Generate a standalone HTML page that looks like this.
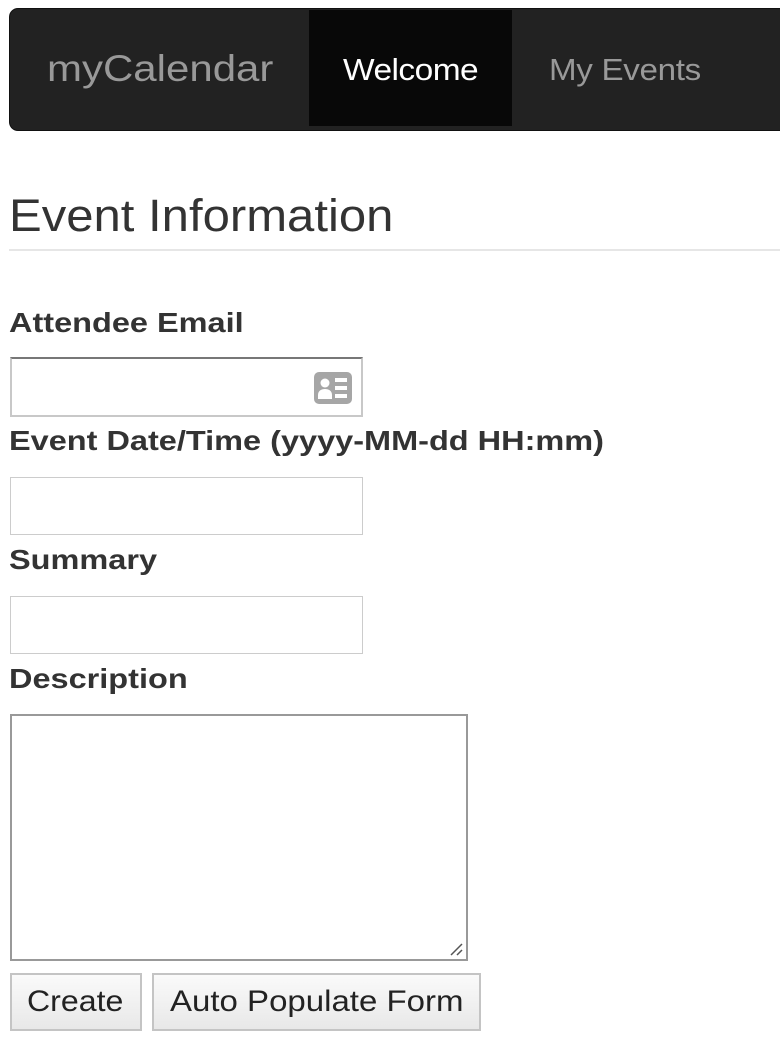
<!DOCTYPE html>
<html><head><style>
body{margin:0;background:#fff;font-family:"Liberation Sans",Arial,sans-serif;color:#333;width:780px;height:1043px;overflow:hidden;position:relative}
.s{display:inline-block;transform-origin:0 50%;white-space:nowrap}
.nav{position:absolute;left:9px;top:8px;width:790px;height:123px;background:#222;border-radius:9px;border:1px solid #111;box-sizing:border-box}
.brand{position:absolute;left:37px;top:40px;font-size:37px;color:#999;line-height:40px}
.act{position:absolute;left:299px;top:1px;width:203px;height:116px;background:#080808}
.w{position:absolute;left:333px;top:44px;font-size:31px;color:#fff;line-height:34px;letter-spacing:-0.5px}
.e{position:absolute;left:539px;top:44px;font-size:31px;color:#999;line-height:34px;letter-spacing:-0.3px}
h1{position:absolute;left:9px;top:190px;margin:0;font-weight:normal;font-size:45px;line-height:52px;color:#333}
.hr{position:absolute;left:9px;top:249px;width:771px;height:2px;background:#e6e6e6}
.l{position:absolute;left:9px;font-weight:bold;font-size:28px;line-height:32px;color:#333}
.in{position:absolute;left:10px;width:353px;height:58px;border:1px solid #ccc;box-sizing:border-box;background:#fff}
.btn{position:absolute;top:973px;height:58px;border:2px solid #c4c4c4;box-sizing:border-box;background:linear-gradient(#fafafa,#e8e8e8);font-size:30px;line-height:54px;color:#222}
</style></head><body>
<div class="nav"><div class="brand"><span class="s" style="transform:scaleX(1.135)">myCalendar</span></div><div class="act"></div><div class="w"><span class="s" style="transform:scaleX(1.08)">Welcome</span></div><div class="e"><span class="s" style="transform:scaleX(1.07)">My Events</span></div></div>
<h1><span class="s" style="transform:scaleX(1.09)">Event Information</span></h1>
<div class="hr"></div>
<div class="l" style="top:307px"><span class="s" style="transform:scaleX(1.16)">Attendee Email</span></div>
<div class="in" style="top:357px;height:60px;border:2px solid #c8c8c8;border-top-color:#777">
<svg style="position:absolute;right:9px;top:13px" width="38" height="32" viewBox="0 0 38 32"><rect width="38" height="32" rx="5" fill="#a6a6a6"/><circle cx="11" cy="11" r="4.5" fill="#fff"/><path d="M4 27v-4c0-4 3-6 7-6s7 2 7 6v4z" fill="#fff"/><rect x="21" y="6" width="12" height="4" fill="#fff"/><rect x="21" y="14" width="12" height="4" fill="#fff"/><rect x="21" y="22" width="12" height="4" fill="#fff"/></svg></div>
<div class="l" style="top:425px"><span class="s" style="transform:scaleX(1.16)">Event Date/Time (yyyy-MM-dd HH:mm)</span></div>
<div class="in" style="top:477px"></div>
<div class="l" style="top:544px"><span class="s" style="transform:scaleX(1.16)">Summary</span></div>
<div class="in" style="top:596px"></div>
<div class="l" style="top:663px"><span class="s" style="transform:scaleX(1.16)">Description</span></div>
<div class="in" style="top:714px;width:458px;height:247px;border:2px solid #999">
<svg style="position:absolute;right:2px;bottom:2px" width="16" height="16"><path d="M3 14L14 3M9 14L14 9" stroke="#555" stroke-width="1.5"/></svg></div>
<div class="btn" style="left:10px;width:132px"><span class="s" style="margin-left:15px;transform:scaleX(1.07)">Create</span></div>
<div class="btn" style="left:152px;width:329px"><span class="s" style="margin-left:16px;transform:scaleX(1.1)">Auto Populate Form</span></div>
</body></html>
